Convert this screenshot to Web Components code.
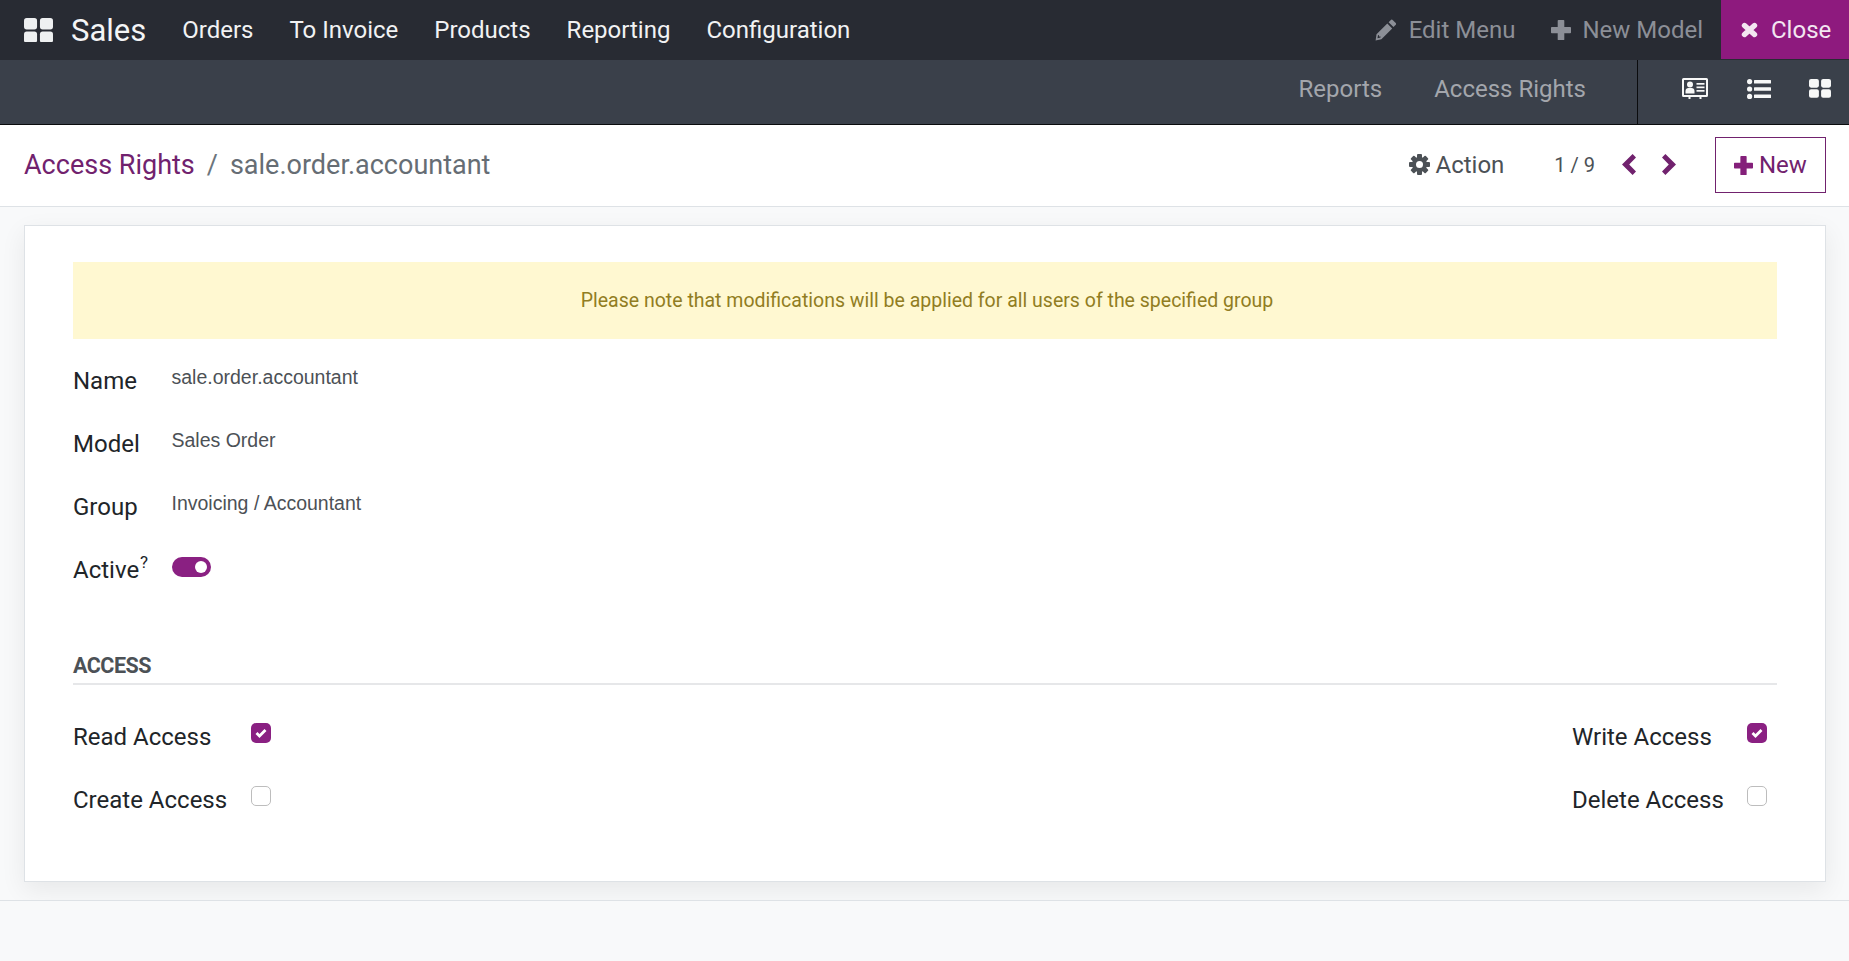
<!DOCTYPE html>
<html><head><meta charset="utf-8"><title>Access Rights</title>
<style>
html,body{margin:0;height:100%;background:#f8f9fa;font-family:Roboto,sans-serif;overflow:hidden}
</style></head><body>
<app-shell>
  <top-bar></top-bar>
  <sub-bar></sub-bar>
  <control-panel></control-panel>
  <form-sheet>
    <note-alert>Please note that modifications will be applied for all users of the specified group</note-alert>
    <form-field label="Name">sale.order.accountant</form-field>
    <form-field label="Model">Sales Order</form-field>
    <form-field label="Group">Invoicing / Accountant</form-field>
    <form-field label="Active" help><toggle-switch></toggle-switch></form-field>
    <section-title>ACCESS</section-title>
    <check-columns>
      <check-field slot="left" label="Read Access" checked></check-field>
      <check-field slot="left" label="Create Access"></check-field>
      <check-field slot="right" label="Write Access" checked></check-field>
      <check-field slot="right" label="Delete Access"></check-field>
    </check-columns>
  </form-sheet>
  <page-footer></page-footer>
</app-shell>
<script>
const ICONS={
 grid:'<rect x="0" y="0" width="12.6" height="11" rx="2.600"/><rect x="15.4" y="0" width="12.6" height="11" rx="2.600"/><rect x="0" y="13" width="12.6" height="11" rx="2.600"/><rect x="15.4" y="13" width="12.6" height="11" rx="2.600"/>',
 pencil:'<path d="M15.6 1.2a1.6 1.6 0 0 1 2.3 0l2.6 2.6a1.6 1.6 0 0 1 0 2.3l-2 2-4.9-4.9zM12.3 4.5l4.9 4.9L6.4 20.2 0.6 21.6 1.5 15.3zM3 16.2l-.5 3 3-.6 .1-1-1.6-.1-.1-1.5z" fill-rule="evenodd"/>',
 plus:'<path d="M7.5 0h5a.8.8 0 0 1 .8.8v6.2h5.9a.8.8 0 0 1 .8.8v4.6a.8.8 0 0 1-.8.8h-5.900v6.200a.8.8 0 0 1-.8.8h-5a.8.8 0 0 1-.8-.8v-6.200H.8a.8.8 0 0 1-.8-.8V7.800A.8.8 0 0 1 .8 7h5.900V.8a.8.8 0 0 1 .8-.8z"/>',
 times:'<path d="M3.500 3.500L13.500 12.500M13.500 3.500L3.500 12.500" fill="none" stroke="currentColor" stroke-width="5.400" stroke-linecap="round"/>',
 gear:'<g><rect x="8" y="0" width="5" height="21" rx="1"/><rect x="8" y="0" width="5" height="21" rx="1" transform="rotate(45 10.500 10.500)"/><rect x="8" y="0" width="5" height="21" rx="1" transform="rotate(90 10.500 10.500)"/><rect x="8" y="0" width="5" height="21" rx="1" transform="rotate(135 10.500 10.500)"/><circle cx="10.500" cy="10.500" r="7.600"/><circle cx="10.500" cy="10.500" r="3.500" fill="#fff"/></g>',
 left:'<path d="M10.600 0l3.400 3.400-6.800 7.100 6.800 7.100-3.400 3.400L0 10.500z"/>',
 right:'<path d="M3.400 0L0 3.400l6.800 7.100L0 17.600 3.400 21 14 10.500z"/>',
 card:'<path fill-rule="evenodd" d="M1.500 0h23A1.500 1.500 0 0 1 26 1.500v16a1.500 1.500 0 0 1-1.500 1.500H1.500A1.500 1.500 0 0 1 0 17.500v-16A1.500 1.500 0 0 1 1.500 0zM2 2v15h22V2z"/><circle cx="8" cy="6.600" r="3"/><path d="M3.500 15.500v-2.600c0-1.700 1.300-2.900 2.900-2.900h3.200c1.600 0 2.900 1.200 2.900 2.900v2.600z"/><rect x="14.500" y="5" width="8" height="1.700"/><rect x="14.500" y="8.500" width="8" height="1.700"/><rect x="14.500" y="12" width="8" height="1.700"/><rect x="6.500" y="18" width="2" height="3"/><rect x="17.500" y="18" width="2" height="3"/>',
 list:'<circle cx="2.600" cy="2.600" r="2.600"/><circle cx="2.600" cy="10" r="2.600"/><circle cx="2.600" cy="17.400" r="2.600"/><rect x="7" y="1" width="17" height="3.400" rx=".5"/><rect x="7" y="8.300" width="17" height="3.400" rx=".5"/><rect x="7" y="15.600" width="17" height="3.400" rx=".5"/>'
};
const BOX={grid:[28,24],pencil:[21,22],plus:[20,20],times:[17,16],gear:[21,21],left:[14,21],right:[14,21],card:[26,21],list:[24,20]};
class Base extends HTMLElement{
  html(s){this.attachShadow({mode:'open'}).innerHTML=s}
}
function ic(n,w,c,extra=''){const [bw,bh]=BOX[n];w=w||bw;const h=w*bh/bw;
  return `<svg style="display:block;flex:none;${extra}" width="${w}" height="${h}" viewBox="0 0 ${bw} ${bh}" fill="${c||'currentColor'}">${ICONS[n]}</svg>`}
customElements.define('app-shell',class extends Base{constructor(){super();this.html(`<style>:host{display:flex;flex-direction:column;height:100vh;width:100%;box-sizing:border-box}</style><slot></slot>`)}});
customElements.define('top-bar',class extends Base{constructor(){super();this.html(`<style>
:host{display:flex;align-items:center;height:60px;background:#282b33;color:#fff;font:24px/1 Roboto,sans-serif;flex:none}
.apps{margin-left:24px;color:#eef0f1}
.brand{font-size:31px;margin-left:18px;margin-right:36px;color:#f4f5f6}
a{padding:0 18px;color:#f1f2f3;white-space:nowrap}
.sp{flex:1}
.m{display:flex;align-items:center;color:#8c8f97;gap:13px;white-space:nowrap}
.close{align-self:flex-start;width:128px;box-sizing:border-box;background:#8e1a7e;color:#f3e6f1;display:flex;align-items:center;padding-left:20px;gap:13px;margin-left:18px;height:59px}
</style>
<span class="apps">${ic('grid',29)}</span><span class="brand">Sales</span>
<a style="padding-left:0">Orders</a><a>To Invoice</a><a>Products</a><a>Reporting</a><a>Configuration</a>
<span class="sp"></span>
<span class="m" style="margin-right:36px">${ic('pencil')}<span>Edit Menu</span></span>
<span class="m" style="gap:11px">${ic('plus')}<span>New Model</span></span>
<span class="close">${ic('times')}<span>Close</span></span>`)}});
customElements.define('sub-bar',class extends Base{constructor(){super();this.html(`<style>
:host{display:flex;align-items:stretch;justify-content:flex-end;height:64px;background:#3a404a;border-bottom:1px solid #0b0c0e;color:#a3a6ac;font:24px/1 Roboto,sans-serif;flex:none}
.t{display:flex;align-items:center;gap:52px;padding:0 51px 5.500px 0;border-right:1px solid #0b0c0e;white-space:nowrap}
.v{display:flex;align-items:center;color:#f7f8f8;padding:0 18px 7px 44px;gap:39px}
</style>
<div class="t"><span>Reports</span><span>Access Rights</span></div>
<div class="v">${ic('card')}${ic('list')}${ic('grid',22,'','margin-left:-1px')}</div>`)}});
customElements.define('control-panel',class extends Base{constructor(){super();this.html(`<style>
:host{display:flex;align-items:center;height:81px;background:#fff;border-bottom:1px solid #dee2e6;padding:0 23px 0 24px;font:24px/1 Roboto,sans-serif;flex:none;box-sizing:content-box}
.bc{font-size:27px;white-space:nowrap;display:flex;align-items:center}
.bc a{color:#71226e}.bc i{font-style:normal;color:#6c757d;margin:0 12px 0 12px}.bc b{font-weight:400;color:#666d74}
.sp{flex:1}
.act{display:flex;align-items:center;color:#4c5156;gap:5px;margin-right:50px;margin-bottom:2px}
.pg{color:#4c5156;font-size:20px;margin-right:27px;margin-bottom:1px}
.nav{display:flex;gap:26px;color:#71226e;margin-right:39px;margin-bottom:2px}
.new{display:flex;align-items:center;box-sizing:border-box;height:56px;width:111px;border:1px solid #71226e;color:#71226e;padding-left:18px;gap:6px;margin-bottom:1px}
</style>
<div class="bc"><a>Access Rights</a><i>/</i><b>sale.order.accountant</b></div><span class="sp"></span>
<div class="act">${ic('gear',21,'#4c5156')}<span>Action</span></div>
<div class="pg">1 / 9</div>
<div class="nav">${ic('left')}${ic('right')}</div>
<div class="new">${ic('plus',19,'#84207a')}<span>New</span></div>`)}});
customElements.define('form-sheet',class extends Base{constructor(){super();this.html(`<style>
:host{display:block;flex:none;box-sizing:border-box;margin:18px 23px 0 24px;height:657px;background:#fff;border:1px solid #dee2e6;box-shadow:0 8px 24px rgba(0,0,0,.07);padding:36px 48px 0}
</style><slot></slot>`)}});
customElements.define('page-footer',class extends Base{constructor(){super();this.html(`<style>:host{display:block;flex:none;margin-top:18px;border-top:1px solid #dee2e6;height:60px;background:#f8f9fa}</style>`)}});
customElements.define('note-alert',class extends Base{constructor(){super();this.html(`<style>
:host{display:flex;align-items:center;justify-content:center;height:77px;background:#fff8d1;color:#917d22;font:19.500px/1 Roboto,sans-serif;margin-bottom:10px;padding-left:4px;white-space:nowrap}
</style><slot></slot>`)}});
customElements.define('form-field',class extends Base{constructor(){super();const l=this.getAttribute('label');this.html(`<style>
:host{display:flex;height:63px;box-sizing:border-box}
.l{width:98.500px;flex:none;color:#212529;font:24px/1 Roboto,sans-serif;padding-top:20px;white-space:nowrap}
sup{font-size:17px;line-height:0;vertical-align:baseline;position:relative;top:-10px;margin-left:1px;color:#212529}
.v{color:#4c5156;font:19.500px/1 "Liberation Sans",Arial,sans-serif;padding-top:19px;white-space:nowrap}
</style><div class="l">${l}${this.hasAttribute('help')?'<sup>?</sup>':''}</div><div class="v"><slot></slot></div>`)}});
customElements.define('toggle-switch',class extends Base{constructor(){super();this.html(`<style>
:host{display:block;width:39px;height:20px;border-radius:10px;background:#8a2082;position:relative}
i{position:absolute;right:4px;top:4px;width:12px;height:12px;border-radius:50%;background:#fff}
</style><i></i>`)}});
customElements.define('section-title',class extends Base{constructor(){super();this.html(`<style>
:host{display:block;margin-top:54px;height:30px;box-sizing:border-box;border-bottom:2px solid #e6e7e9;color:#4c5156;font:700 21.500px/1 Roboto,sans-serif;letter-spacing:-.5px;white-space:nowrap}
</style><slot></slot>`)}});
customElements.define('check-columns',class extends Base{constructor(){super();this.html(`<style>
:host{display:flex;justify-content:space-between;margin-top:21px}
.c{display:flex;flex-direction:column}
.r{width:205px}
</style><div class="c"><slot name="left"></slot></div><div class="c r"><slot name="right"></slot></div>`)}});
customElements.define('check-field',class extends Base{constructor(){super();const on=this.hasAttribute('checked');this.html(`<style>
:host{display:flex;height:63px;box-sizing:border-box;color:#212529;font:24px/1 Roboto,sans-serif}
.l{width:178px;flex:none;white-space:nowrap;padding-top:19px}
.b{width:20px;height:20px;box-sizing:border-box;border-radius:5px;margin-top:17px;display:flex;align-items:center;justify-content:center}
.on{background:#8a2082}.off{background:#fff;border:1px solid #bdbdbd}
</style><div class="l">${this.getAttribute('label')}</div>
<div class="b ${on?'on':'off'}">${on?'<svg width="12" height="10" viewBox="0 0 12 10"><path d="M1.500 5l3 3 6-6" fill="none" stroke="#fff" stroke-width="2.800"/></svg>':''}</div>`);
 if(this.slot==='right')this.shadowRoot.querySelector('.l').style.width='175px';}});
</script>
</body></html>
